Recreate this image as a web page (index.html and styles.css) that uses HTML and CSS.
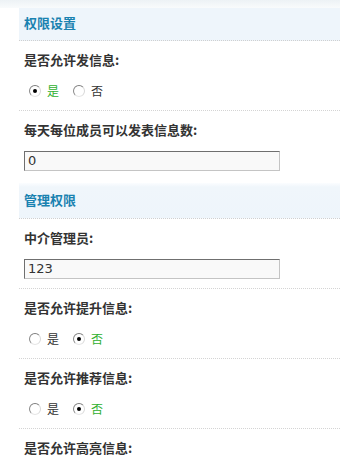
FILE: index.html
```html
<!DOCTYPE html>
<html lang="zh-CN">
<head>
<meta charset="utf-8">
<link rel="stylesheet" href="styles.css">
</head>
<body>
<div class="topbar"></div>
<div class="panel">
  <div class="hd hd-first">权限设置</div>
  <div class="item">
    <div class="label">是否允许发信息:</div>
    <div class="ctrl">
      <span class="radio checked"></span><span class="opt on">是</span>
      <span class="radio"></span><span class="opt">否</span>
    </div>
  </div>
  <div class="item noline">
    <div class="label">每天每位成员可以发表信息数:</div>
    <div class="ctrl"><div class="input">0</div></div>
  </div>
  <div class="hd hd-next">管理权限</div>
  <div class="item">
    <div class="label">中介管理员:</div>
    <div class="ctrl"><div class="input">123</div></div>
  </div>
  <div class="item">
    <div class="label">是否允许提升信息:</div>
    <div class="ctrl">
      <span class="radio"></span><span class="opt">是</span>
      <span class="radio checked"></span><span class="opt on">否</span>
    </div>
  </div>
  <div class="item">
    <div class="label">是否允许推荐信息:</div>
    <div class="ctrl">
      <span class="radio"></span><span class="opt">是</span>
      <span class="radio checked"></span><span class="opt on">否</span>
    </div>
  </div>
  <div class="item last">
    <div class="label">是否允许高亮信息:</div>
  </div>
</div>
</body>
</html>
```

FILE: styles.css
```css
html, body {
  margin: 0;
  padding: 0;
  background: #ffffff;
  font-family: "Noto Sans CJK SC", "DejaVu Sans", sans-serif;
  color: #333333;
}
.topbar {
  height: 8px;
  background: linear-gradient(#edf2f5, #f9fbfc);
}
.panel {
  margin-left: 19px;
}
.hd {
  background: #eef5fb;
  color: #1a82b0;
  font-weight: bold;
  font-size: 13px;
  padding-left: 5px;
  border-bottom: 1px dotted #d0d0d0;
}
.hd-first {
  height: 32px;
  line-height: 30px;
}
.hd-next {
  margin-top: 2px;
  height: 35px;
  line-height: 33px;
  background: linear-gradient(#fbfdff 0, #f0f6fb 4px, #eef5fb 100%);
}
.item {
  padding: 10px 0 9px 5px;
  border-bottom: 1px dotted #d4d4d4;
}
.item.noline {
  border-bottom: none;
  padding-bottom: 10px;
}
.item.last {
  border-bottom: none;
}
.label {
  height: 18px;
  line-height: 18px;
  font-size: 13px;
  font-weight: bold;
  color: #333333;
}
.ctrl {
  margin-top: 12px;
  height: 20px;
  display: flex;
  align-items: center;
  font-size: 12px;
}
.radio {
  box-sizing: border-box;
  width: 12px;
  height: 12px;
  border-radius: 50%;
  border: 1px solid;
  border-color: #7d7d7d #d8d8d8 #e6e6e6 #8a8a8a;
  background: #ffffff;
  margin-left: 5px;
  margin-right: 6px;
  display: flex;
  align-items: center;
  justify-content: center;
}
.radio + .opt + .radio {
  margin-left: 14px;
}
.radio.checked::after {
  content: "";
  width: 4px;
  height: 4px;
  border-radius: 50%;
  background: #000000;
}
.opt {
  color: #333333;
  line-height: 20px;
}
.opt.on {
  color: #2fb02f;
}
.input {
  box-sizing: border-box;
  width: 256px;
  height: 20px;
  border: 1px solid;
  border-color: #6f6f6f #c4c4c4 #c4c4c4 #6f6f6f;
  background: #f9f9f9;
  font-family: "DejaVu Sans", Verdana, sans-serif;
  font-size: 13px;
  line-height: 18px;
  padding-left: 3px;
  color: #333333;
}
```
